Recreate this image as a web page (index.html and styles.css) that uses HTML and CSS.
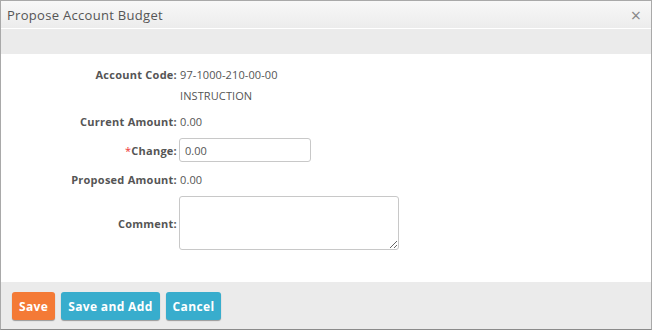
FILE: index.html
```html
<!DOCTYPE html>
<html>
<head>
<meta charset="utf-8">
<link rel="stylesheet" href="styles.css">
</head>
<body>
<div class="dialog">
  <div class="titlebar">
    <span class="title">Propose Account Budget</span>
    <span class="close">&times;</span>
  </div>
  <div class="band"></div>
  <div class="body">
    <div class="row r-code">
      <div class="label">Account Code:</div>
      <div class="value">97-1000-210-00-00</div>
    </div>
    <div class="row r-desc">
      <div class="label"></div>
      <div class="value">INSTRUCTION</div>
    </div>
    <div class="row r-cur">
      <div class="label">Current Amount:</div>
      <div class="value">0.00</div>
    </div>
    <div class="row r-chg">
      <div class="label"><span class="req">*</span>Change:</div>
      <div class="value"><input class="input" type="text" value="0.00"></div>
    </div>
    <div class="row r-prop">
      <div class="label">Proposed Amount:</div>
      <div class="value">0.00</div>
    </div>
    <div class="row r-com">
      <div class="label">Comment:</div>
      <div class="value"><textarea class="textarea"></textarea></div>
    </div>
  </div>
  <div class="footer">
    <button class="btn btn-orange">Save</button>
    <button class="btn btn-blue">Save and Add</button>
    <button class="btn btn-blue">Cancel</button>
  </div>
</div>
</body>
</html>
```
FILE: styles.css
```css
* { box-sizing: border-box; }
html, body { margin: 0; padding: 0; background: #fff; }
body { font-family: "Open Sans", "Noto Sans", sans-serif; color: #555; }
.dialog {
  width: 652px;
  height: 330px;
  border: 1px solid #a9a9a9;
  border-bottom-color: #8a8a8a;
  display: flex;
  flex-direction: column;
  background: #fff;
}
.titlebar {
  height: 28px;
  flex: none;
  background: linear-gradient(#f8f8f8, #ececec);
  border-bottom: 1px solid #fff;
  display: flex;
  align-items: center;
  justify-content: space-between;
  padding: 0 10px 0 6px;
}
.title { font-size: 13px; color: #555; letter-spacing: 0.3px; }
.close { font-size: 18px; color: #888; line-height: 1; font-weight: normal; }
.band { height: 25px; flex: none; background: #ebebeb; }
.body { flex: 1; padding-top: 10px; }
.row { display: flex; align-items: center; }
.label {
  width: 177px;
  text-align: right;
  font-size: 11px;
  font-weight: bold;
  color: #555;
  letter-spacing: 0.25px;
  padding-right: 1px;
  flex: none;
}
.value { font-size: 11px; color: #555; padding-left: 2px; letter-spacing: 0.1px; }
.req { color: #e33; font-weight: normal; }
.r-code { height: 20px; }
.r-desc { height: 20px; margin-top: 1px; }
.r-cur { height: 20px; margin-top: 6px; }
.r-chg { height: 24px; margin-top: 7px; }
.r-chg .value, .r-com .value { padding-left: 1px; }
.r-prop { height: 20px; margin-top: 7px; }
.r-com { margin-top: 7px; }
.input {
  width: 132px;
  height: 24px;
  border: 1px solid #c8c8c8;
  border-radius: 3px;
  font-family: inherit;
  font-size: 11px;
  color: #555;
  padding: 0 5px;
  outline: none;
}
.textarea {
  width: 220px;
  height: 54px;
  border: 1px solid #c8c8c8;
  border-radius: 3px;
  display: block;
  font-family: inherit;
  font-size: 11px;
  resize: both;
  outline: none;
}
.footer {
  height: 47px;
  flex: none;
  background: #ebebeb;
  display: flex;
  align-items: center;
  gap: 6px;
  padding: 0 0 0 11px;
}
.btn {
  height: 28px;
  border: none;
  border-radius: 3px;
  color: #fff;
  font-family: inherit;
  font-size: 12px;
  font-weight: bold;
  letter-spacing: 0.35px;
  padding: 0 7px;
  box-shadow: 0 1px 1px rgba(0,0,0,0.35);
  margin-top: 1px;
}
.btn-orange { background: #f47a36; }
.btn-blue { background: #38adcd; }
```
